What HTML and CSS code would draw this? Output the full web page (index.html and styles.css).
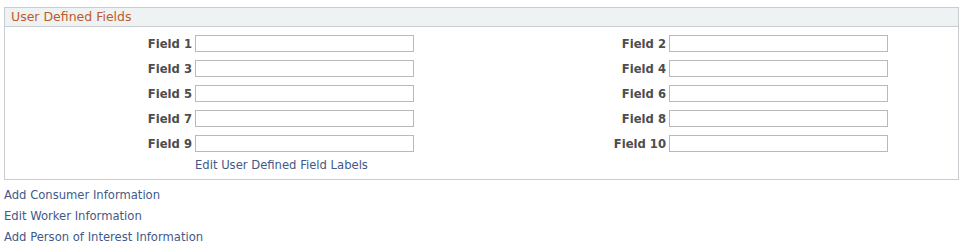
FILE: index.html
```html
<!DOCTYPE html>
<html lang="en">
<head>
    <meta charset="UTF-8">
    <title>User Defined Fields</title>
    <link rel="stylesheet" href="styles.css">
</head>
<body>
    <div class="panel">
        <div class="panel-header">User Defined Fields</div>
        <div class="panel-body">
            <div class="field-grid">
                <label class="field-label">Field 1</label>
                <input type="text" class="field-input">
                <label class="field-label">Field 2</label>
                <input type="text" class="field-input">

                <label class="field-label">Field 3</label>
                <input type="text" class="field-input">
                <label class="field-label">Field 4</label>
                <input type="text" class="field-input">

                <label class="field-label">Field 5</label>
                <input type="text" class="field-input">
                <label class="field-label">Field 6</label>
                <input type="text" class="field-input">

                <label class="field-label">Field 7</label>
                <input type="text" class="field-input">
                <label class="field-label">Field 8</label>
                <input type="text" class="field-input">

                <label class="field-label">Field 9</label>
                <input type="text" class="field-input">
                <label class="field-label">Field 10</label>
                <input type="text" class="field-input">

                <span></span>
                <a href="#" class="link edit-labels">Edit User Defined Field Labels</a>
            </div>
        </div>
    </div>

    <div class="actions">
        <a href="#" class="link">Add Consumer Information</a>
        <a href="#" class="link">Edit Worker Information</a>
        <a href="#" class="link">Add Person of Interest Information</a>
    </div>
</body>
</html>
```

FILE: styles.css
```css
body {
    margin: 0;
    padding: 7px 5px 0 4px;
    font-family: "DejaVu Sans", Verdana, sans-serif;
    font-size: 11.6px;
    color: #333;
    background: #fff;
}

.panel {
    border: 1px solid #c9cdd1;
}

.panel-header {
    height: 18px;
    line-height: 18px;
    padding-left: 6px;
    background-color: #eef2f3;
    border-bottom: 1px solid #c9cdd1;
    color: #c05a28;
    font-size: 12.5px;
}

.panel-body {
    padding: 8px 0 2px 0;
}

.field-grid {
    display: grid;
    grid-template-columns: 190px 219px 255px 219px;
    grid-auto-rows: 17px;
    row-gap: 8px;
    align-items: center;
}

.field-label {
    text-align: right;
    padding-right: 3px;
    font-weight: bold;
    color: #4d4d4d;
}

.field-input {
    box-sizing: border-box;
    width: 219px;
    height: 17px;
    margin: 0;
    padding: 0 2px;
    border: 1px solid #b9b9b9;
    background: #fff;
    font: inherit;
}

.edit-labels {
    grid-column: 2 / 4;
    align-self: start;
    line-height: 14px;
    margin-top: -2px;
}

.link {
    color: #3f5a8a;
    text-decoration: none;
}

.actions {
    display: flex;
    flex-direction: column;
    align-items: flex-start;
    padding-top: 8px;
    row-gap: 7px;
}

.actions .link {
    line-height: 14px;
}
```
